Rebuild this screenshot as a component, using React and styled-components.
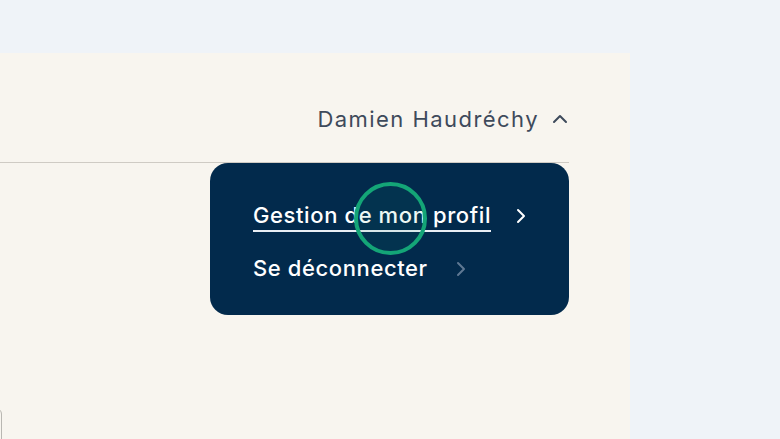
import React from "react";
import styled, { createGlobalStyle } from "styled-components";

const Global = createGlobalStyle`
  html, body { margin: 0; padding: 0; background: #eff3f8; }
  body { font-family: Inter, "Open Sans", sans-serif; overflow: hidden; }
`;

const Stage = styled.div`
  width: 780px;
  height: 439px;
  padding-top: 53px;
  box-sizing: border-box;
`;

const Panel = styled.div`
  position: relative;
  width: 630px;
  height: 386px;
  background: #f8f5ef;
  overflow: hidden;
`;

const Header = styled.header`
  width: 569px;
  height: 110px;
  border-bottom: 1px solid #cfcbc4;
  box-sizing: border-box;
  display: flex;
  align-items: center;
  justify-content: flex-end;
  padding-top: 22px;
`;

const UserButton = styled.button`
  display: flex;
  align-items: center;
  gap: 12px;
  background: none;
  border: 0;
  padding: 0;
  font-family: inherit;
  font-size: 22px;
  letter-spacing: 1.45px;
  color: #3e4a5b;
  cursor: pointer;
`;

const Menu = styled.nav`
  position: absolute;
  top: 110px;
  left: 210px;
  width: 359px;
  height: 152px;
  box-sizing: border-box;
  background: #022a4c;
  border-radius: 18px;
  padding: 37px 0 0 43px;
  display: flex;
  flex-direction: column;
  gap: 21px;
`;

const Item = styled.a`
  display: flex;
  align-items: center;
  gap: ${(p) => (p.$wide ? "28px" : "25px")};
  color: #ffffff;
  text-decoration: none;
  font-size: 22px;
  font-weight: 500;
  letter-spacing: 0.6px;
  line-height: 28px;
  height: 32px;
`;

const Label = styled.span`
  border-bottom: ${(p) => (p.$active ? "2px solid #e9eef4" : "2px solid transparent")};
  padding-bottom: 1px;
`;

const Chevron = styled.span`
  display: flex;
  color: ${(p) => (p.$dim ? "#5f7893" : "#ffffff")};
`;

const Card = styled.div`
  position: absolute;
  left: -100px;
  top: 355px;
  width: 102px;
  height: 60px;
  border: 1px solid #b9b7b2;
  border-radius: 6px;
  box-sizing: border-box;
`;

const Ring = styled.div`
  position: absolute;
  left: 354px;
  top: 129px;
  width: 73px;
  height: 73px;
  box-sizing: border-box;
  border-radius: 50%;
  border: 4.5px solid #14a577;
  background: rgba(20, 165, 120, 0.08);
  pointer-events: none;
`;

const ChevronRight = () => (
  <svg width="10" height="16" viewBox="0 0 10 16" fill="none">
    <path d="M2 2 L8 8 L2 14" stroke="currentColor" strokeWidth="2" strokeLinecap="round" strokeLinejoin="round" />
  </svg>
);

const ChevronUp = () => (
  <svg width="18" height="18" viewBox="0 0 18 18" fill="none">
    <path d="M3 12 L9 6 L15 12" stroke="#3e4a5b" strokeWidth="2" strokeLinecap="round" strokeLinejoin="round" />
  </svg>
);

export default function App() {
  return (
    <>
      <Global />
      <Stage>
        <Panel>
          <Header>
            <UserButton>
              Damien Haudréchy
              <ChevronUp />
            </UserButton>
          </Header>
          <Menu>
            <Item href="#">
              <Label $active>Gestion de mon profil</Label>
              <Chevron><ChevronRight /></Chevron>
            </Item>
            <Item href="#" $wide>
              <Label>Se déconnecter</Label>
              <Chevron $dim><ChevronRight /></Chevron>
            </Item>
          </Menu>
          <Card />
          <Ring />
        </Panel>
      </Stage>
    </>
  );
}
